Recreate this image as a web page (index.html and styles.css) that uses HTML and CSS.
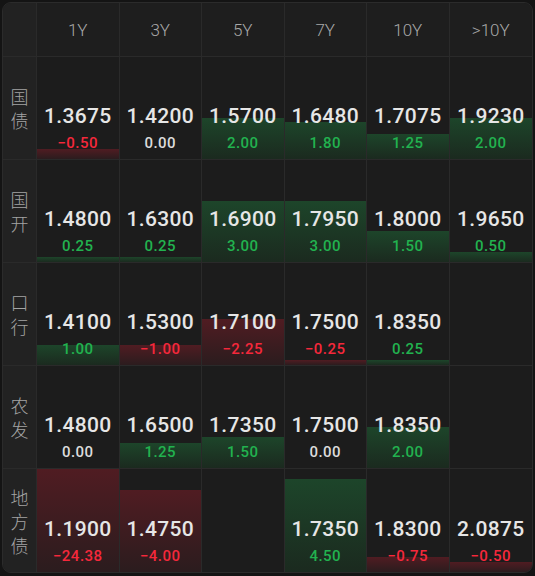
FILE: index.html
```html
<!doctype html>
<html lang="zh-CN">
<head>
    <meta charset="UTF-8">
    <title>收益率矩阵</title>
    <link rel="stylesheet" href="styles.css">
</head>
<body>
    <div class="matrix">
        <div class="head corner"></div>
        <div class="head">1Y</div>
        <div class="head">3Y</div>
        <div class="head">5Y</div>
        <div class="head">7Y</div>
        <div class="head">10Y</div>
        <div class="head">&gt;10Y</div>

        <!-- 国债 -->
        <div class="label">国<br>债</div>
        <div class="cell"><i class="bar down" style="height:10%"></i><b>1.3675</b><span class="down">−0.50</span></div>
        <div class="cell"><b>1.4200</b><span>0.00</span></div>
        <div class="cell"><i class="bar up" style="height:40%"></i><b>1.5700</b><span class="up">2.00</span></div>
        <div class="cell"><i class="bar up" style="height:36%"></i><b>1.6480</b><span class="up">1.80</span></div>
        <div class="cell"><i class="bar up" style="height:25%"></i><b>1.7075</b><span class="up">1.25</span></div>
        <div class="cell"><i class="bar up" style="height:40%"></i><b>1.9230</b><span class="up">2.00</span></div>

        <!-- 国开 -->
        <div class="label">国<br>开</div>
        <div class="cell"><i class="bar up" style="height:5%"></i><b>1.4800</b><span class="up">0.25</span></div>
        <div class="cell"><i class="bar up" style="height:5%"></i><b>1.6300</b><span class="up">0.25</span></div>
        <div class="cell"><i class="bar up" style="height:60%"></i><b>1.6900</b><span class="up">3.00</span></div>
        <div class="cell"><i class="bar up" style="height:60%"></i><b>1.7950</b><span class="up">3.00</span></div>
        <div class="cell"><i class="bar up" style="height:30%"></i><b>1.8000</b><span class="up">1.50</span></div>
        <div class="cell"><i class="bar up" style="height:10%"></i><b>1.9650</b><span class="up">0.50</span></div>

        <!-- 口行 -->
        <div class="label">口<br>行</div>
        <div class="cell"><i class="bar up" style="height:20%"></i><b>1.4100</b><span class="up">1.00</span></div>
        <div class="cell"><i class="bar down" style="height:20%"></i><b>1.5300</b><span class="down">−1.00</span></div>
        <div class="cell"><i class="bar down" style="height:45%"></i><b>1.7100</b><span class="down">−2.25</span></div>
        <div class="cell"><i class="bar down" style="height:5%"></i><b>1.7500</b><span class="down">−0.25</span></div>
        <div class="cell"><i class="bar up" style="height:5%"></i><b>1.8350</b><span class="up">0.25</span></div>
        <div class="cell"></div>

        <!-- 农发 -->
        <div class="label">农<br>发</div>
        <div class="cell"><b>1.4800</b><span>0.00</span></div>
        <div class="cell"><i class="bar up" style="height:25%"></i><b>1.6500</b><span class="up">1.25</span></div>
        <div class="cell"><i class="bar up" style="height:30%"></i><b>1.7350</b><span class="up">1.50</span></div>
        <div class="cell"><b>1.7500</b><span>0.00</span></div>
        <div class="cell"><i class="bar up" style="height:40%"></i><b>1.8350</b><span class="up">2.00</span></div>
        <div class="cell"></div>

        <!-- 地方债 -->
        <div class="label">地<br>方<br>债</div>
        <div class="cell"><i class="bar down" style="height:100%"></i><b>1.1900</b><span class="down">−24.38</span></div>
        <div class="cell"><i class="bar down" style="height:80%"></i><b>1.4750</b><span class="down">−4.00</span></div>
        <div class="cell"></div>
        <div class="cell"><i class="bar up" style="height:90%"></i><b>1.7350</b><span class="up">4.50</span></div>
        <div class="cell"><i class="bar down" style="height:15%"></i><b>1.8300</b><span class="down">−0.75</span></div>
        <div class="cell"><i class="bar down" style="height:10%"></i><b>2.0875</b><span class="down">−0.50</span></div>
    </div>
</body>
</html>
```

FILE: styles.css
```css
*{
    padding: 0;
    margin: 0;
    box-sizing: border-box;
}
body{
    background: #141414;
    padding: 2px;
    font-family: Roboto, "Noto Sans CJK SC", sans-serif;
}
.matrix{
    width: 531px;
    height: 571px;
    display: grid;
    grid-template-columns: 34px repeat(6, 1fr);
    grid-template-rows: 54px repeat(5, 1fr);
    background: #1c1c1c;
    border: 1px solid #2b2b2b;
    border-radius: 9px;
    overflow: hidden;
}
.head{
    display: flex;
    align-items: center;
    justify-content: center;
    background: #1e1e1e;
    color: #a8a8a8;
    font-size: 17px;
    font-weight: 300;
    border-right: 1px solid #2a2a2a;
    border-bottom: 1px solid #2a2a2a;
}
.head:nth-child(7){
    border-right: 0;
}
.corner,
.label{
    background: #222;
}
.label{
    display: flex;
    align-items: center;
    justify-content: center;
    text-align: center;
    color: #a4a4a4;
    font-family: "Noto Sans CJK SC", sans-serif;
    font-size: 18px;
    font-weight: 300;
    line-height: 24px;
    border-right: 1px solid #2a2a2a;
    border-bottom: 1px solid #2a2a2a;
}
.cell{
    position: relative;
    display: flex;
    flex-direction: column;
    justify-content: flex-end;
    align-items: center;
    padding-bottom: 6px;
    border-right: 1px solid #2a2a2a;
    border-bottom: 1px solid #2a2a2a;
}
.cell:nth-child(7n){
    border-right: 0;
}
.matrix > :nth-last-child(-n+7){
    border-bottom: 0;
}
.bar{
    position: absolute;
    left: 0;
    right: 0;
    bottom: 0;
}
.bar.up{
    background: linear-gradient(#1d452a, #1b2a1f);
}
.bar.down{
    background: linear-gradient(#501c22, #2b1c1e);
}
.cell b{
    position: relative;
    color: #e6e6e6;
    font-size: 21px;
    font-weight: 500;
    line-height: 26px;
    letter-spacing: 0.3px;
}
.cell span{
    position: relative;
    margin-top: 4px;
    color: #dcdcdc;
    font-size: 15px;
    font-weight: 500;
    line-height: 20px;
    letter-spacing: 0.5px;
}
.cell span.up{
    color: #22b24f;
}
.cell span.down{
    color: #f5283b;
}
```
